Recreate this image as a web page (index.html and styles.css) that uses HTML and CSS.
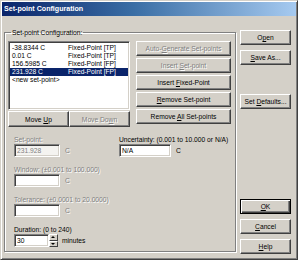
FILE: index.html
```html
<!DOCTYPE html>
<html lang="en">
<head>
  <meta charset="UTF-8">
  <title>Set-point Configuration</title>
  <link rel="stylesheet" href="styles.css">
</head>
<body>

  <div class="dialog">
    <div class="titlebar">Set-point Configuration</div>

    <div class="client">
      <fieldset class="group">
        <legend>Set-point Configuration:</legend>

        <div class="top">
          <div class="listcol">
            <div class="listbox">
              <div class="row"><span class="c1">-38.8344 C</span><span>Fixed-Point [TP]</span></div>
              <div class="row"><span class="c1">0.01 C</span><span>Fixed-Point [TP]</span></div>
              <div class="row"><span class="c1">156.5985 C</span><span>Fixed-Point [FP]</span></div>
              <div class="row sel"><span class="c1">231.928 C</span><span>Fixed-Point [FP]</span></div>
              <div class="row"><span class="c1">&lt;new set-point&gt;</span></div>
            </div>
            <div class="movebtns">
              <button class="btn">Move <u>U</u>p</button>
              <button class="btn" disabled>Move Do<u>w</u>n</button>
            </div>
          </div>

          <div class="actions">
            <button class="btn" disabled>Auto-<u>G</u>enerate Set-points</button>
            <button class="btn" disabled>Insert <u>S</u>et-point</button>
            <button class="btn">Insert <u>F</u>ixed-Point</button>
            <button class="btn"><u>R</u>emove Set-point</button>
            <button class="btn">Remove <u>A</u>ll Set-points</button>
          </div>
        </div>

        <div class="fields">
          <div class="field">
            <div class="label off">Set-point:</div>
            <div class="line"><input class="edit w46 dis" value="231.928" disabled><span class="unit off">C</span></div>
          </div>
          <div class="field">
            <div class="label">Uncertainty: (0.001 to 10.000 or N/A)</div>
            <div class="line"><input class="edit w52" value="N/A"><span class="unit">C</span></div>
          </div>
          <div class="field">
            <div class="label off">Window: (&plusmn;0.001 to 100.000)</div>
            <div class="line"><input class="edit w46"><span class="unit off">C</span></div>
          </div>
          <div class="field"></div>
          <div class="field">
            <div class="label off">Tolerance: (&plusmn;0.0001 to 20.0000)</div>
            <div class="line"><input class="edit w46"><span class="unit off">C</span></div>
          </div>
          <div class="field"></div>
          <div class="field">
            <div class="label">Duration: (0 to 240)</div>
            <div class="line">
              <input class="edit w35" value="30">
              <span class="spin"><span class="up"></span><span class="down"></span></span>
              <span class="unit">minutes</span>
            </div>
          </div>
        </div>
      </fieldset>

      <div class="side">
        <button class="btn">O<u>p</u>en</button>
        <button class="btn gap5"><u>S</u>ave As...</button>
        <button class="btn defaults">Set <u>D</u>efaults...</button>
        <button class="btn ok"><u>O</u>K</button>
        <button class="btn gap5"><u>C</u>ancel</button>
        <button class="btn gap5"><u>H</u>elp</button>
      </div>
    </div>
  </div>

</body>
</html>
```

FILE: styles.css
```css
body { margin: 0; background: #fff; font-family: "Liberation Sans", Arial, sans-serif; font-size: 6.7px; color: #000; }

.dialog { box-sizing: border-box; width: 298px; height: 260px; padding: 1px; display: flex; flex-direction: column;
  background: #d4d0c8; border: 1px solid; border-color: #d4d0c8 #404040 #404040 #d4d0c8;
  box-shadow: inset 1px 1px #fff, inset -1px -1px #808080; }

.titlebar { height: 14px; display: flex; align-items: center; padding-left: 2px; color: #fff; font-weight: bold; font-size: 7.1px;
  background: linear-gradient(to right, #0a246a, #3a6ea5 45%, #a6caf0); }

.client { flex: 1; display: flex; padding: 0 4px 4px 2px; }

.group { box-sizing: border-box; width: 232px; margin: 12px 0 2px 0; padding: 0 3px 0 3px; min-width: 0;
  border: 1px solid #808080; box-shadow: inset 1px 1px #fff, 1px 1px #fff; }
.group legend { padding: 0 1px; margin-left: 3px; line-height: 9px; }

.top { display: flex; gap: 6px; margin-top: 4px; }

.listcol { width: 122px; }
.listbox { box-sizing: border-box; height: 69px; padding: 2px 1px; background: #fff;
  border: 1px solid; border-color: #808080 #fff #fff #808080; box-shadow: inset 1px 1px #404040, inset -1px -1px #d4d0c8; }
.row { display: flex; height: 8px; line-height: 8px; padding-left: 2px; white-space: nowrap; }
.row .c1 { width: 56px; }
.row.sel { background: #0a246a; color: #fff; }

.movebtns { display: flex; margin-top: 1px; }
.movebtns .btn { width: 61px; height: 16px; }

.actions { width: 95px; display: flex; flex-direction: column; gap: 2px; }
.actions .btn { height: 15px; }

.btn { box-sizing: border-box; padding: 0; font: inherit; color: #000; background: #d4d0c8; white-space: nowrap;
  border: 1px solid; border-color: #fff #404040 #404040 #fff; box-shadow: inset -1px -1px #808080, inset 1px 1px #d4d0c8; }
.btn:disabled { color: #808080; text-shadow: 1px 1px #fff; }

.fields { display: grid; grid-template-columns: 105px auto; row-gap: 8px; margin-top: 8px; padding-left: 6px; }
.label { height: 9px; line-height: 9px; white-space: nowrap; }
.off { color: #808080; text-shadow: 1px 1px #fff; }
.line { display: flex; align-items: center; height: 13px; }
.unit { margin-left: 5px; }

.edit { box-sizing: border-box; height: 13px; padding: 0 2px; font: inherit; background: #fff; outline: none;
  border: 1px solid; border-color: #808080 #fff #fff #808080; box-shadow: inset 1px 1px #404040, inset -1px -1px #d4d0c8; }
.edit.dis { color: #808080; background: #f4f3f0; }
.w46 { width: 46px; }
.w52 { width: 52px; }
.w35 { width: 35px; }

.spin { display: flex; flex-direction: column; width: 9px; height: 13px; }
.spin span { flex: 1; position: relative; background: #d4d0c8; border: 1px solid; border-color: #fff #404040 #404040 #fff; }
.spin .up::after, .spin .down::after { content: ""; position: absolute; left: 1px; top: 1px; border: 2px solid transparent; }
.spin .up::after { border-bottom-color: #000; top: -1px; }
.spin .down::after { border-top-color: #000; }
.spin + .unit { margin-left: 4px; }

.side { width: 51px; margin-left: 4px; padding-top: 14px; display: flex; flex-direction: column; }
.side .btn { height: 15px; }
.side .gap5 { margin-top: 5px; }
.side .defaults { margin-top: 29px; }
.side .ok { margin-top: auto; border-color: #000; box-shadow: inset 1px 1px #fff, inset -1px -1px #404040, inset -2px -2px #808080; }
```
